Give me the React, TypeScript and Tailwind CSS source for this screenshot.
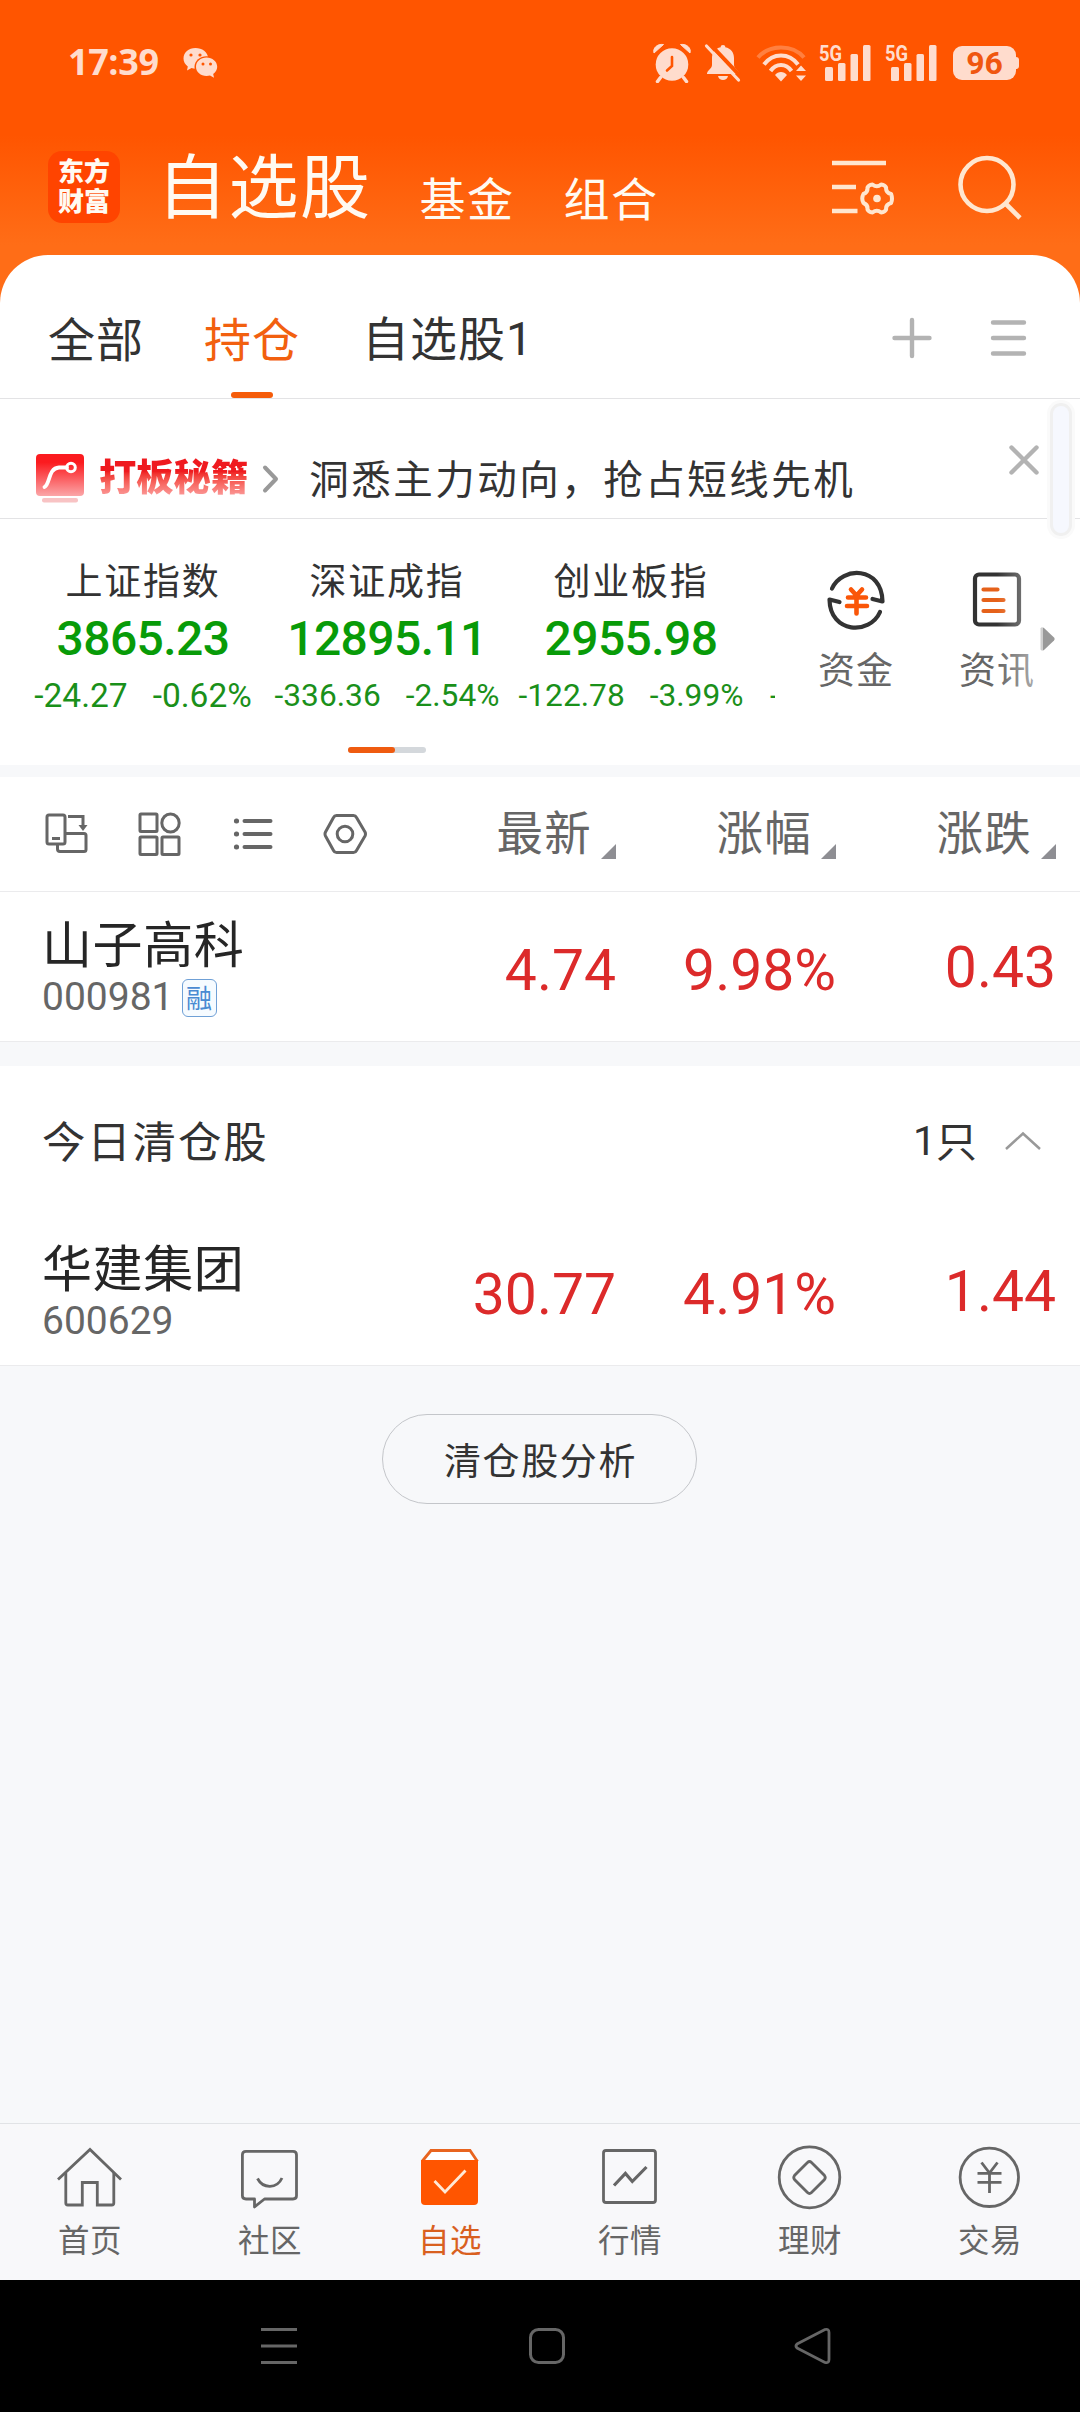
import React from 'react'
import clsx from 'clsx'

const CN = "font-['Noto_Sans_CJK_SC',sans-serif]"
const NUM = "font-['Roboto',sans-serif]"

const indices = [
    { name: '上证指数', value: '3865.23', diff: '-24.27', pct: '-0.62%', small: 'text-[33.5px]' },
    { name: '深证成指', value: '12895.11', diff: '-336.36', pct: '-2.54%', small: 'text-[31.7px]' },
    { name: '创业板指', value: '2955.98', diff: '-122.78', pct: '-3.99%', small: 'text-[31.7px]' },
]

const SignalIcon = () => (
    <svg className="overflow-visible" width="54" height="40" viewBox="0 0 54 40" fill="#ffdccd">
        <text x="0" y="17.5" fontSize="22" fontWeight="700" fontFamily="Roboto" textLength="23" lengthAdjust="spacingAndGlyphs">5G</text>
        <rect x="6" y="24" width="8" height="14" rx="1.5" />
        <rect x="19" y="20" width="7.5" height="18" rx="1.5" />
        <rect x="31.5" y="11" width="7.5" height="27" rx="1.5" />
        <rect x="44" y="2" width="7.5" height="36" rx="1.5" />
    </svg>
)

const StatusBar = () => (
    <div className="flex h-[120px] items-center pl-[68px] pr-[61px]">
        <span className="mt-[3px] font-['Open_Sans',sans-serif] text-[36px] font-bold leading-none tracking-[-0.4px] text-[#ffdccd]">17:39</span>
        <svg className="ml-[24px] mt-[5px]" width="36" height="32" viewBox="0 0 36 32">
            <path fill="#ffdccd" d="M12.5 1C5.6 1 .5 5.5 .5 11.5c0 3.3 1.6 6 4.3 8L4 23.5l4.5-2.4c1.3.4 2.700.6 4 .6C19 21.700 25 17 25 11S19 1 12.500 1z" />
            <ellipse cx="23.5" cy="20" rx="12" ry="10.8" fill="#ff5500" />
            <path fill="#ffdccd" d="M23.5 10.5c-5.8 0-10.5 4-10.5 9.3S17.700 29 23.500 29c1.200 0 2.400-.2 3.500-.5l4 2.300-.8-3.800c2.500-1.700 4-4.300 4-7.200 0-5.300-4.900-9.300-10.700-9.300z" />
            <g fill="#ff5500">
                <circle cx="8" cy="8" r="1.6" /><circle cx="17" cy="8" r="1.6" />
                <circle cx="20" cy="17" r="1.5" /><circle cx="27.5" cy="17" r="1.5" />
            </g>
        </svg>
        <div className="ml-auto flex items-center pt-[5px]">
            <svg width="40" height="40" viewBox="0 0 40 40" fill="#ffdccd">
                <path d="M8.5 34.5l-3 4M31.5 34.5l3 4" stroke="#ffdccd" strokeWidth="3.5" strokeLinecap="round" />
                <circle cx="20" cy="21.5" r="16.3" />
                <path d="M2 10C.5 5.500 5 .500 11.500 1.500zM38 10C39.500 5.500 35 .5 28.500 1.500z" stroke="#ffdccd" strokeLinejoin="round" />
                <path d="M20 14v9l-5 4.500" fill="none" stroke="#ff5500" strokeWidth="2.600" strokeLinecap="round" />
            </svg>
            <svg className="ml-[12px]" width="38" height="40" viewBox="0 0 38 40" fill="#ffdccd">
                <path d="M19 2c1.500 0 2.300.9 2.300 2.200C27 5.300 30 9.500 30 15v7c0 4 5 5 5 9H3c0-4 5-5 5-9v-7c0-5.500 3-9.700 8.700-10.800C16.700 2.900 17.500 2 19 2zM14 33h10c-.5 2.500-2.500 4-5 4s-4.500-1.500-5-4z" />
                <path d="M4 -1l36 38" stroke="#ff5500" strokeWidth="4" />
                <path d="M2.500 3l32 34" stroke="#ffdccd" strokeWidth="3.200" strokeLinecap="round" />
            </svg>
            <svg className="ml-[13px]" width="54" height="40" viewBox="0 0 54 40" fill="none" strokeWidth="4">
                <path d="M3 14.500C14 1 38 1 49 14.500" stroke="#ff8040" />
                <path d="M9 21.500C18 9.500 34 9.500 43 21.500M15.500 28C21 20 31 20 36.500 28" stroke="#ffdccd" />
                <path d="M20 32c3-4 9-4 12 0l-6 6.500zM46 22.500l5 5.500H41zM46 38l5-5.500H41z" fill="#ffdccd" />
            </svg>
            <span className="ml-[10px]"><SignalIcon /></span>
            <span className="ml-[12px]"><SignalIcon /></span>
            <div className="ml-[14px] flex items-center">
                <div className={clsx(NUM, 'flex h-[34px] w-[63px] items-center justify-center rounded-[9px] bg-[#ffdccd] text-[32px] font-bold leading-none text-[#f0560f]')}>96</div>
                <div className="h-[12px] w-[3px] rounded-r-[3px] bg-[#ffdccd]" />
            </div>
        </div>
    </div>
)

const TitleBar = () => (
    <div className={clsx(CN, 'flex h-[135px] items-center pb-[2px] pl-[48px] pr-[58px] leading-none text-[#fffaf2]')}>
        <div className="flex h-[72px] w-[72px] flex-col items-center justify-center rounded-[14px] bg-[#ff4400] pb-[3px] text-[26px] font-black leading-[30px]">
            <span>东方</span>
            <span>财富</span>
        </div>
        <span className="mb-[8px] ml-[37px] text-[70px] tracking-[1.5px]">自选股</span>
        <span className="ml-[48px] mt-[19px] text-[46px] tracking-[1.5px]">基金</span>
        <span className="ml-[49px] mt-[19px] text-[46px] tracking-[1.5px]">组合</span>
        <svg className="ml-auto" width="66" height="64" viewBox="0 0 66 64" fill="none" stroke="#ffe6cf" strokeWidth="4.6">
            <path d="M3 8h54M3 32h24M3 56h25.5" />
            <path strokeWidth="4" strokeLinejoin="round" d="M43.5 29.500q4.300 3.500 8.600 0q4 .5 5 3q-.5 5 5 6.500q1.800 5 0 9q-5.500 1.500-5 6.500q-1 2.500-5 3q-4.300-3.500-8.600 0q-4-.5-5-3q.5-5-4-6.500q-2.500-4.500 0-9q4.500-1.500 4-6.500q1-2.500 5-3z" />
            <circle cx="48" cy="43.500" r="3.800" fill="#ffe6cf" stroke="none" />
        </svg>
        <svg className="ml-[61px]" width="66" height="66" viewBox="0 0 66 66" fill="none" stroke="#ffe6cf" strokeWidth="4.600">
            <circle cx="31" cy="30.500" r="26.500" />
            <path d="M50 50l14 14" />
        </svg>
    </div>
)

const GroupTabs = () => (
    <div className={clsx(CN, 'flex h-[144px] items-center border-b border-[#e3e3e5] pl-[48px] pr-[52px] text-[47px] leading-none tracking-[1px] text-[#333]')}>
        <span className="mt-[20px]">全部</span>
        <div className="ml-[60px] flex h-full flex-col items-center text-[#f2600f]">
            <span className="mt-[58px]">持仓</span>
            <span className="mt-auto h-[6px] w-[42px] rounded-full bg-[#f55c0a]" />
        </div>
        <span className="ml-[62px] mt-[20px] flex">
            自选股<span className={clsx(NUM, 'mt-[3px]')}>1</span>
        </span>
        <svg className="ml-auto mt-[23px]" width="40" height="42" viewBox="0 0 40 42" stroke="#b3b3b3" strokeWidth="4.4" strokeLinecap="round">
            <path d="M2.5 21h35M20 3v36" />
        </svg>
        <svg className="ml-[56px] mt-[23px]" width="40" height="42" viewBox="0 0 40 42" stroke="#b3b3b3" strokeWidth="4.400" strokeLinecap="round">
            <path d="M5 5.500h31M5 21h31M5 36.500h31" />
        </svg>
    </div>
)

const PromoBanner = () => (
    <div className={clsx(CN, 'relative flex h-[120px] items-center border-b border-[#e3e3e5] pl-[36px] leading-none')}>
        <svg className="mt-[40px]" width="48" height="50" viewBox="0 0 48 50">
            <defs>
                <linearGradient id="promo" x1="0" y1="0" x2="0" y2="1">
                    <stop offset="0.2" stopColor="#fb1b1f" />
                    <stop offset="1" stopColor="#fba6a8" />
                </linearGradient>
            </defs>
            <rect width="48" height="42" rx="4" fill="url(#promo)" />
            <path d="M8.5 33C14 31 12 14 23 13.500h8" fill="none" stroke="#fff" strokeWidth="3.800" strokeLinecap="round" />
            <circle cx="35" cy="13.500" r="4.300" fill="none" stroke="#fff" strokeWidth="3" />
            <rect x="6" y="44" width="36" height="4.500" rx="2" fill="#f8c3c4" />
        </svg>
        <span className="ml-[15px] mt-[35px] bg-gradient-to-b from-[#ef1a1f] from-40% to-[#fba5a7] bg-clip-text py-[4px] text-[37.3px] font-black leading-none text-transparent">打板秘籍</span>
        <svg className="ml-[14px] mt-[40px]" width="18" height="30" viewBox="0 0 18 30" fill="none" stroke="#999" strokeWidth="4" strokeLinecap="round" strokeLinejoin="round">
            <path d="M3 3.5L14 15L3 26.5" />
        </svg>
        <span className="ml-[29px] mt-[36px] whitespace-nowrap text-[39.5px] tracking-[2.5px] text-[#333]">洞悉主力动向，抢占短线先机</span>
        <svg className="absolute left-[1008px] top-[45px]" width="32" height="32" viewBox="0 0 32 32" stroke="#b3b3b3" strokeWidth="4.4" strokeLinecap="round">
            <path d="M3.500 3.500l25 25M28.500 3.500l-25 25" />
        </svg>
        <div className="absolute left-[1053px] top-[7px] z-10 h-[127px] w-[16px] rounded-full bg-[#f6f8fe] shadow-[0_0_0_3px_#f0f0f0,0_0_0_6px_#fafafa]" />
    </div>
)

const IndexStrip = () => (
    <div className="flex h-[246px]">
        <div className="flex w-[775px] flex-col">
            <div className="flex overflow-hidden pb-[6px] pl-[21px] pt-[40px]">
                {indices.map(i => (
                    <div key={i.name} className="flex w-[244px] shrink-0 flex-col items-center whitespace-nowrap leading-none">
                        <span className={clsx(CN, 'mt-[2px] h-[38px] text-[37px] tracking-[1.7px] text-[#333]')}>{i.name}</span>
                        <span className={clsx(NUM, 'mt-[16px] h-[48px] text-[48px] font-medium leading-[48px] tracking-[-0.6px] text-[#089b08]')}>{i.value}</span>
                        <div className={clsx(NUM, i.small, 'mt-[16px] flex h-[33px] items-center gap-[25px] text-[#1a901a]')}>
                            <span>{i.diff}</span>
                            <span>{i.pct}</span>
                        </div>
                    </div>
                ))}
                <span className={clsx(NUM, 'ml-[17px] mt-[120px] text-[32px] leading-[33px] text-[#1a901a]')}>-</span>
            </div>
            <div className="ml-[348px] mt-[29px] h-[6px] w-[78px] rounded-full bg-[#d4d8dc]">
                <div className="h-[6px] w-[47px] rounded-full bg-[#ef5b10]" />
            </div>
        </div>
        <div className={clsx(CN, 'relative flex pt-[40px] text-[37px] leading-none tracking-[1px] text-[#666]')}>
            <div className="ml-[42px] flex w-[78px] flex-col items-center pt-[10px]">
                <svg width="62" height="62" viewBox="0 0 62 62" fill="none" stroke="#333" strokeWidth="4.2" strokeLinecap="round" strokeLinejoin="round">
                    <path d="M7 19.5C17 -3 57 -3 57.5 32.500l-10-2.500" />
                    <path d="M55 43C45 66 5 65 4.500 30.500l10 2.500" />
                    <path stroke="#fa5608" strokeWidth="4.600" d="M26 20.500l5.500 6l5.500-6M23 28.500h18M22 37h20M31.500 28v16.500" />
                </svg>
                <span className="mt-[19px]">资金</span>
            </div>
            <div className="ml-[63px] flex w-[78px] flex-col items-center pt-[10px]">
                <svg width="62" height="62" viewBox="0 0 62 62" fill="none" stroke="#333" strokeWidth="4.200" strokeLinecap="round">
                    <rect x="9" y="5.500" width="44" height="50" rx="4" />
                    <path stroke="#e5611a" d="M17.500 20.500h14M17.500 31h20M17.500 42h20" />
                </svg>
                <span className="mt-[19px]">资讯</span>
            </div>
            <div className="absolute left-[222px] top-[46px] h-[140px] w-[46px] bg-gradient-to-r from-white/0 to-white/55" />
            <svg className="mt-[67px]" width="20" height="26" viewBox="0 0 20 26" fill="#999">
                <path d="M4.500 2.500Q5.500 .5 8 2l10 9.500q1.500 1.500 0 3L8 24q-2.500 1.500-3.500-.5z" />
            </svg>
        </div>
    </div>
)

const ColumnHead = ({ label }: { label: string }) => (
    <div className="flex w-[220px] items-end justify-end">
        <span className="mb-[8px]">{label}</span>
        <svg className="mb-[2px] ml-[9px]" width="15" height="15" viewBox="0 0 15 15" fill="#8e8e93">
            <path d="M15 0v15H0z" />
        </svg>
    </div>
)

const ListToolbar = () => (
    <div className={clsx(CN, 'flex h-[115px] items-center border-b border-[#ebebed] pr-[24px] text-[46.5px] leading-none tracking-[1.2px] text-[#666]')}>
        <div className="flex w-[396px] items-center pl-[44px]">
            <svg width="46" height="44" viewBox="0 0 46 44" fill="none" stroke="#666" strokeWidth="3">
                <rect x="3" y="3" width="18" height="29" rx="2" />
                <path d="M8 26.5h8M13.5 32v5q0 2.5 2.5 2.5h24q2 0 2-2v-14q0-2-2-2H21M24 4.500h15v10" />
                <path d="M34.500 13h9L39 19z" fill="#666" stroke="none" />
            </svg>
            <svg className="ml-[47px]" width="46" height="46" viewBox="0 0 46 46" fill="none" stroke="#666" strokeWidth="3">
                <rect x="3" y="3" width="17" height="17.500" rx="1" />
                <ellipse cx="33.500" cy="12" rx="8.700" ry="9" />
                <rect x="3" y="26" width="17" height="17.500" rx="1" />
                <rect x="25" y="26" width="17" height="17.500" rx="1" />
            </svg>
            <svg className="ml-[48px]" width="44" height="44" viewBox="0 0 44 44" stroke="#666" strokeWidth="4" strokeLinecap="round">
                <path d="M13.500 9h26M13.500 22h26M13.500 35h26" />
                <path strokeWidth="5" d="M5.400 9h.2M5.400 22h.2M5.400 35h.2" />
            </svg>
            <svg className="ml-[48px]" width="46" height="44" viewBox="0 0 46 44" fill="none" stroke="#666" strokeWidth="3" strokeLinejoin="round">
                <path d="M13.500 3.500h17q2 0 3 2l8.500 14.500q1 2 0 4l-8.500 14.500q-1 2-3 2h-17q-2 0-3-2L2.500 24q-1-2 0-4L10.500 5.500q1-2 3-2z" />
                <circle cx="22" cy="22" r="7.800" />
            </svg>
        </div>
        <ColumnHead label="最新" />
        <ColumnHead label="涨幅" />
        <ColumnHead label="涨跌" />
    </div>
)

type Stock = { name: string; code: string; margin?: boolean; price: string; pct: string; change: string }

const StockRow = ({ s }: { s: Stock }) => (
    <div className={clsx(NUM, 'flex h-[150px] border-b border-[#ebebed] pr-[24px] leading-none')}>
        <div className="w-[376px] pl-[42px] pt-[24px]">
            <div className={clsx(CN, 'h-[49px] text-[50px] tracking-[0.6px] text-[#262626]')}>{s.name}</div>
            <div className="mt-[13px] flex h-[39px] items-center text-[39px] text-[#666]">
                <span>{s.code}</span>
                {s.margin && (
                    <span className={clsx(CN, 'ml-[8px] flex h-[38px] w-[35px] items-center justify-center rounded-[6px] border border-[#6fa0d6] bg-[#f6fbff] pb-[2px] text-[26px] leading-none text-[#4a8ad2]')}>融</span>
                )}
            </div>
        </div>
        <div className="flex flex-1 pt-[50px] text-[57px] text-[#dc2a2a]">
            <span className="w-[240px] text-right">{s.price}</span>
            <span className="w-[220px] text-right">{s.pct}</span>
            <span className="mt-[-3px] w-[220px] text-right">{s.change}</span>
        </div>
    </div>
)

const tabs = [
    {
        label: '首页',
        icon: <><path d="M4 37.500L36 7.500L67 37.500" /><path d="M11.800 31v30q0 2 2 2h14.500V40.500h15V63h14.500q2 0 2-2V31" /></>,
    },
    {
        label: '社区',
        icon: <><path d="M12 9.300h47q3.500 0 3.500 3.500v41q0 3.200-3.500 3.200H30.500L20.500 65V57H12q-3.600 0-3.600-3.200v-41q0-3.500 3.600-3.500z" strokeLinejoin="round" /><path d="M23.500 36.500C29 47 43 47 48 36" /></>,
    },
    {
        label: '自选',
        active: true,
        icon: (
            <>
                <path d="M8 19.500L17 8.500h39L63.500 19.500" fill="#fff" stroke="#e8641f" />
                <path d="M7 18h57v41q0 4-4 4H11q-4 0-4-4z" fill="#ff5500" stroke="none" />
                <path d="M20.500 39L31 50L51.500 28.500" stroke="#ffe9d6" />
            </>
        ),
    },
    {
        label: '行情',
        icon: <><rect x="9.500" y="8.500" width="52" height="52" rx="2.500" /><path d="M20 43.500L31.400 31.500L38.300 39.500L52.500 25" strokeWidth="3.200" /></>,
    },
    {
        label: '理财',
        icon: <><ellipse cx="35.500" cy="35.300" rx="30.300" ry="30.500" /><path d="M33.500 20.500q2-2 4 0L50.500 33.500q1.500 2 0 4L37.500 50.500q-2 2-4 0L20.500 37.500q-1.500-2 0-4z" /></>,
    },
    {
        label: '交易',
        icon: <><circle cx="35.300" cy="35.300" r="29.200" /><path d="M27.500 20.500L35.500 31L43.500 20.500M23.500 31.300h24M23.500 40.300h24M35.500 31v20" /></>,
    },
]

const BottomTabs = () => (
    <div className={clsx(CN, 'flex h-[157px] border-t border-[#e1e3e6] bg-[#f8f8fa] pt-[18px] text-[31.5px] leading-none tracking-[0.5px]')}>
        {tabs.map(t => (
            <div key={t.label} className={clsx('flex w-[180px] flex-col items-center', t.active ? 'text-[#d9601f]' : 'text-[#666]')}>
                <svg width="72" height="72" viewBox="0 0 72 72" fill="none" stroke="#666" strokeWidth="2.8">{t.icon}</svg>
                <span className="mt-[9px]">{t.label}</span>
            </div>
        ))}
    </div>
)

const SystemNav = () => (
    <div className="flex h-[132px] items-center bg-black pl-[259px]">
        <svg width="40" height="40" viewBox="0 0 40 40" stroke="#666" strokeWidth="3">
            <path d="M2 3.5h36M2 20h36M2 36.5h36" />
        </svg>
        <svg className="ml-[228px]" width="40" height="40" viewBox="0 0 40 40" fill="none" stroke="#666" strokeWidth="3">
            <rect x="3.5" y="3.5" width="33" height="33" rx="8" />
        </svg>
        <svg className="ml-[226px]" width="40" height="40" viewBox="0 0 40 40" fill="none" stroke="#666" strokeWidth="2.8" strokeLinejoin="round">
            <path d="M4 18L32 3.500q4-1 4 3v27q0 4-4 3L4 22q-2-2 0-4z" />
        </svg>
    </div>
)

export default function App() {
    return (
        <div className="flex h-[2412px] w-[1080px] flex-col overflow-hidden bg-[#f7f8fa]">
            <div className="bg-[linear-gradient(180deg,#ff5500_0px,#ff5500_135px,#ff6d17_245px,#ff6d17_310px)]">
                <StatusBar />
                <TitleBar />
                <div className="rounded-t-[48px] bg-white">
                    <GroupTabs />
                </div>
            </div>
            <div className="bg-white">
                <PromoBanner />
                <IndexStrip />
            </div>
            <div className="mt-[12px] bg-white">
                <ListToolbar />
                <StockRow s={{ name: '山子高科', code: '000981', margin: true, price: '4.74', pct: '9.98%', change: '0.43' }} />
            </div>
            <div className="mt-[24px] bg-white">
                <div className={clsx(CN, 'flex h-[150px] items-center pl-[42px] pr-[38px] text-[43.5px] leading-none tracking-[1.8px] text-[#333]')}>
                    <span className="mb-[2px]">今日清仓股</span>
                    <span className="mb-[2px] ml-auto flex text-[41px] tracking-normal">
                        <span className={clsx(NUM, 'mt-[2px]')}>1</span>只
                    </span>
                    <svg className="ml-[27px]" width="38" height="20" viewBox="0 0 38 20" fill="none" stroke="#999" strokeWidth="2.5">
                        <path d="M2 18L19 2.5L36 18" />
                    </svg>
                </div>
                <StockRow s={{ name: '华建集团', code: '600629', price: '30.77', pct: '4.91%', change: '1.44' }} />
            </div>
            <div className="flex flex-1 items-start justify-center pt-[48px]">
                <button className={clsx(CN, 'mr-[1px] flex h-[90px] w-[315px] items-center justify-center rounded-full border-[1.5px] border-[#c4c6ca] pl-[2px] text-[37px] leading-none tracking-[1.6px] text-[#333]')}>清仓股分析</button>
            </div>
            <BottomTabs />
            <SystemNav />
        </div>
    )
}
